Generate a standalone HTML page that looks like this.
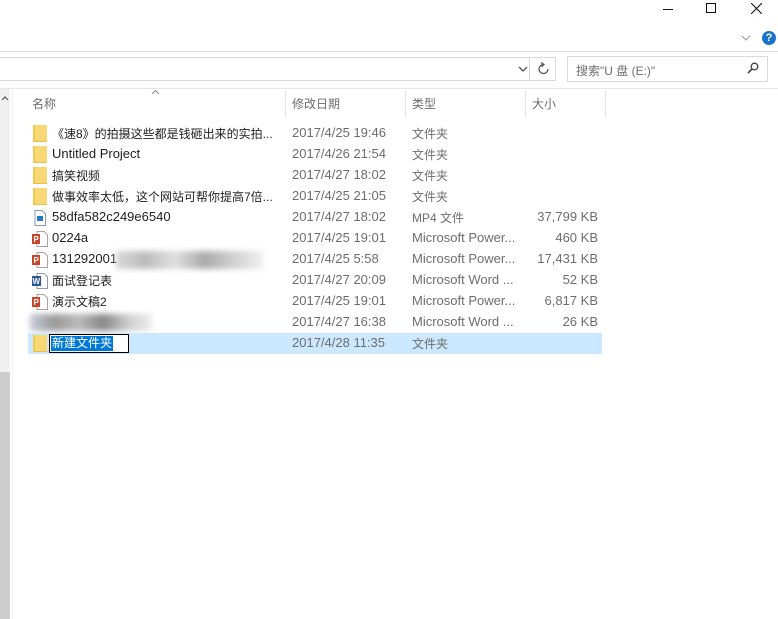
<!DOCTYPE html>
<html><head><meta charset="utf-8"><style>
*{margin:0;padding:0;box-sizing:border-box}
body{width:778px;height:619px;background:#fff;position:relative;overflow:hidden;font-family:"Liberation Sans","Noto Sans CJK SC",sans-serif;font-size:12px;color:#1e1e1e}
.a{position:absolute}
.row{position:absolute;left:28px;width:574px;height:21px;font-size:13px}
.row span{position:absolute;top:2px;white-space:nowrap}
.row span.c{font-size:12px;top:2px}
.n{left:24px}
.d{left:264px;color:#6d6d6d}
.t{left:384px;color:#6d6d6d}
.s{right:4px;color:#6d6d6d}
.fold{position:absolute;left:5px;top:2px;width:14px;height:17px;background:#f8d775;border-left:2px solid #f0c94e;border-bottom:1px solid #e8be4a}
.ppt{position:absolute;left:4px;top:3px;width:16px;height:16px}
.hd{position:absolute;top:95px;color:#6d6d6d}
.vl{position:absolute;top:90px;width:1px;height:28px;background:#e5e5e5}
</style></head><body>
<div class="a" style="left:663px;top:9px;width:10px;height:1px;background:#111"></div>
<div class="a" style="left:706px;top:3px;width:10px;height:10px;border:1px solid #111"></div>
<svg class="a" style="left:751px;top:3px" width="11" height="11"><path d="M0 0L11 11M11 0L0 11" stroke="#111" stroke-width="1.1"/></svg>
<svg class="a" style="left:741px;top:35px" width="10" height="6"><path d="M1 1L5 5L9 1" stroke="#999" fill="none"/></svg>
<div class="a" style="left:762px;top:31px;width:14px;height:14px;border-radius:50%;background:#1a73c8;color:#fff;font-size:11px;font-weight:bold;text-align:center;line-height:14px">?</div>
<div class="a" style="left:0;top:51px;width:778px;height:1px;background:#dadada"></div>
<div class="a" style="left:-2px;top:57px;width:532px;height:24px;border:1px solid #d9d9d9"></div>
<svg class="a" style="left:518px;top:66px" width="10" height="7"><path d="M1 1L5 5L9 1" stroke="#555" fill="none" stroke-width="1.3"/></svg>
<div class="a" style="left:530px;top:57px;width:26px;height:24px;border:1px solid #d9d9d9;border-left:none"></div>
<svg class="a" style="left:537px;top:62px" width="13" height="14"><path d="M6.5 2.5A4.5 4.5 0 1 0 11 7" stroke="#555" fill="none" stroke-width="1.3"/><path d="M4 0.5L7 2.5L4.5 5" stroke="#555" fill="none" stroke-width="1.2"/></svg>
<div class="a" style="left:567px;top:56px;width:201px;height:26px;border:1px solid #d9d9d9"></div>
<div class="a" style="left:576px;top:62px;color:#6d6d6d">搜索"U 盘 (E:)"</div>
<svg class="a" style="left:747px;top:62px" width="12" height="12"><circle cx="7.5" cy="4.5" r="3.3" stroke="#444" fill="none" stroke-width="1.3"/><path d="M5 7L1 11" stroke="#444" stroke-width="1.6"/></svg>
<div class="a" style="left:0;top:88px;width:778px;height:1px;background:#e5e5e5"></div>
<div class="a" style="left:0;top:89px;width:10px;height:530px;background:#f0f0f0"></div>
<div class="a" style="left:0;top:372px;width:10px;height:247px;background:#cdcdcd"></div>
<svg class="a" style="left:1px;top:95px" width="8" height="6"><path d="M1 5L4 2L7 5" stroke="#555" fill="none" stroke-width="1.2"/></svg>
<div class="a" style="left:12px;top:89px;width:1px;height:530px;background:#f0f0f0"></div>
<svg class="a" style="left:151px;top:89px" width="9" height="6"><path d="M1 5L4.5 1.5L8 5" stroke="#888" fill="none"/></svg>
<div class="hd" style="left:32px">名称</div>
<div class="vl" style="left:285px"></div>
<div class="hd" style="left:292px">修改日期</div>
<div class="vl" style="left:405px"></div>
<div class="hd" style="left:412px">类型</div>
<div class="vl" style="left:525px"></div>
<div class="hd" style="left:532px">大小</div>
<div class="vl" style="left:605px"></div>

<div class="row" style="top:123px"><div class="fold"></div><span class="n c">《速8》的拍摄这些都是钱砸出来的实拍...</span><span class="d">2017/4/25 19:46</span><span class="t c">文件夹</span></div>
<div class="row" style="top:144px"><div class="fold"></div><span class="n">Untitled Project</span><span class="d">2017/4/26 21:54</span><span class="t c">文件夹</span></div>
<div class="row" style="top:165px"><div class="fold"></div><span class="n c">搞笑视频</span><span class="d">2017/4/27 18:02</span><span class="t c">文件夹</span></div>
<div class="row" style="top:186px"><div class="fold"></div><span class="n c">做事效率太低，这个网站可帮你提高7倍...</span><span class="d">2017/4/25 21:05</span><span class="t c">文件夹</span></div>
<div class="row" style="top:207px"><svg class="ppt" viewBox="0 0 16 16"><path d="M3 0.5H10L13.5 4V15.5H3Z" fill="#fff" stroke="#8a9bb0"/><rect x="5" y="6" width="6" height="5" fill="#1e7bc8"/></svg><span class="n">58dfa582c249e6540</span><span class="d">2017/4/27 18:02</span><span class="t c">MP4 文件</span><span class="s">37,799 KB</span></div>
<div class="row" style="top:228px"><svg class="ppt" viewBox="0 0 16 16"><path d="M5 0.5H12L15.5 4V15.5H5Z" fill="#fff" stroke="#b0a0a0"/><rect x="0" y="3" width="8" height="10" fill="#c8472b"/><text x="1.5" y="11" font-size="8" fill="#fff" font-family="Liberation Sans" font-weight="bold">P</text></svg><span class="n">0224a</span><span class="d">2017/4/25 19:01</span><span class="t">Microsoft Power...</span><span class="s">460 KB</span></div>
<div class="row" style="top:249px"><svg class="ppt" viewBox="0 0 16 16"><path d="M5 0.5H12L15.5 4V15.5H5Z" fill="#fff" stroke="#b0a0a0"/><rect x="0" y="3" width="8" height="10" fill="#c8472b"/><text x="1.5" y="11" font-size="8" fill="#fff" font-family="Liberation Sans" font-weight="bold">P</text></svg><span class="n">131292001</span><div class="a" style="left:88px;top:2px;width:147px;height:18px;background:linear-gradient(90deg,#d8d8d8,#bbb,#e0e0e0,#aaa,#d0d0d0,#f0f0f0);filter:blur(3px)"></div><span class="d">2017/4/25 5:58</span><span class="t">Microsoft Power...</span><span class="s">17,431 KB</span></div>
<div class="row" style="top:270px"><svg class="ppt" viewBox="0 0 16 16"><path d="M5 0.5H12L15.5 4V15.5H5Z" fill="#fff" stroke="#8a9bb0"/><rect x="0" y="3" width="9" height="10" fill="#2b5797"/><text x="0.5" y="11" font-size="8" fill="#fff" font-family="Liberation Sans" font-weight="bold">W</text></svg><span class="n c">面试登记表</span><span class="d">2017/4/27 20:09</span><span class="t">Microsoft Word ...</span><span class="s">52 KB</span></div>
<div class="row" style="top:291px"><svg class="ppt" viewBox="0 0 16 16"><path d="M5 0.5H12L15.5 4V15.5H5Z" fill="#fff" stroke="#b0a0a0"/><rect x="0" y="3" width="8" height="10" fill="#c8472b"/><text x="1.5" y="11" font-size="8" fill="#fff" font-family="Liberation Sans" font-weight="bold">P</text></svg><span class="n c">演示文稿2</span><span class="d">2017/4/25 19:01</span><span class="t">Microsoft Power...</span><span class="s">6,817 KB</span></div>
<div class="row" style="top:312px"><div class="a" style="left:2px;top:2px;width:122px;height:17px;background:linear-gradient(90deg,#c8ccd8,#999,#bbb,#888,#ccc,#eee);filter:blur(3px)"></div><span class="d">2017/4/27 16:38</span><span class="t">Microsoft Word ...</span><span class="s">26 KB</span></div>
<div class="row" style="top:333px;background:#cce8ff"><div class="fold"></div><div class="a" style="left:21px;top:1px;width:80px;height:19px;border:1px solid #000;background:#fff"></div><div class="a" style="left:23px;top:3px;height:15px;background:#0078d7;color:#fff;line-height:15px;padding:0 1px;font-size:12px">新建文件夹</div><span class="d">2017/4/28 11:35</span><span class="t c">文件夹</span></div>
</body></html>
